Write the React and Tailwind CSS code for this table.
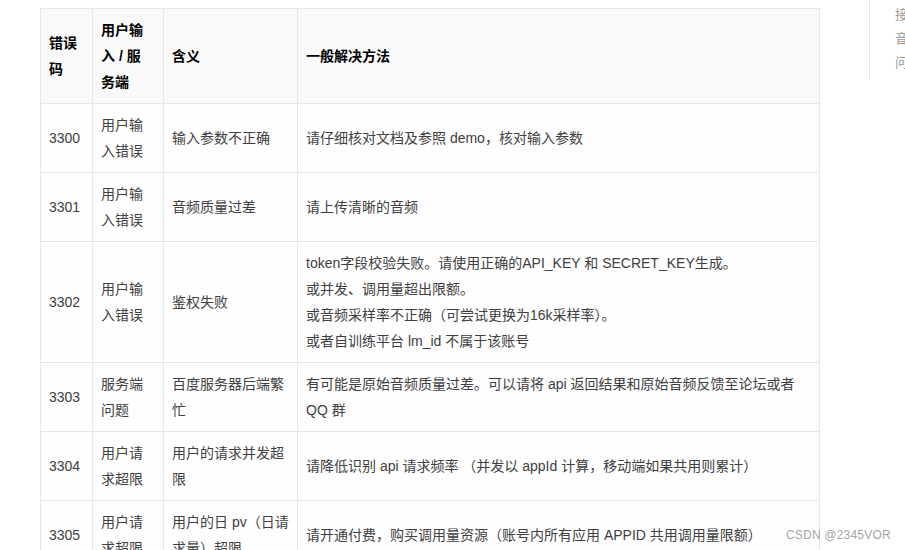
import React from 'react';

const rows = [
  { code: '3300', type: '用户输入错误', meaning: '输入参数不正确', fix: ['请仔细核对文档及参照 demo，核对输入参数'] },
  { code: '3301', type: '用户输入错误', meaning: '音频质量过差', fix: ['请上传清晰的音频'] },
  {
    code: '3302',
    type: '用户输入错误',
    meaning: '鉴权失败',
    fix: [
      'token字段校验失败。请使用正确的API_KEY 和 SECRET_KEY生成。',
      '或并发、调用量超出限额。',
      '或音频采样率不正确（可尝试更换为16k采样率）。',
      '或者自训练平台 lm_id 不属于该账号',
    ],
  },
  { code: '3303', type: '服务端问题', meaning: '百度服务器后端繁忙', fix: ['有可能是原始音频质量过差。可以请将 api 返回结果和原始音频反馈至论坛或者 QQ 群'] },
  { code: '3304', type: '用户请求超限', meaning: '用户的请求并发超限', fix: ['请降低识别 api 请求频率 （并发以 appId 计算，移动端如果共用则累计）'] },
  { code: '3305', type: '用户请求超限', meaning: '用户的日 pv（日请求量）超限', fix: ['请开通付费，购买调用量资源（账号内所有应用 APPID 共用调用量限额）'] },
];

const cell = 'border border-[#e6e6e6] px-2 py-2 align-middle text-left';

export default function App() {
  return (
    <div
      className="relative w-[905px] h-[550px] overflow-hidden bg-white text-[14px] leading-[26px]"
      style={{ fontFamily: '"Liberation Sans", "Noto Sans CJK SC", sans-serif' }}
    >
      <div className="flex items-start pl-[40px]">
        {/* Article table */}
        <table className="mt-[8px] w-[779px] shrink-0 table-fixed border-collapse">
          <colgroup>
            <col className="w-[52px]" />
            <col className="w-[71px]" />
            <col className="w-[134px]" />
            <col className="w-[522px]" />
          </colgroup>
          <thead>
            <tr className="bg-[#f9f9f9] text-black font-bold">
              <th className={cell}>错误码</th>
              <th className={`${cell} pr-[10px]`}>用户输入 / 服务端</th>
              <th className={cell}>含义</th>
              <th className={cell}>一般解决方法</th>
            </tr>
          </thead>
          <tbody className="text-[#404040]">
            {rows.map((r) => (
              <tr key={r.code} className="bg-[#fefefe]">
                <td className={cell}>{r.code}</td>
                <td className={cell}>{r.type}</td>
                <td className={cell}>{r.meaning}</td>
                <td className={cell}>
                  {r.fix.map((line, i) => (
                    <div key={i}>{line}</div>
                  ))}
                </td>
              </tr>
            ))}
          </tbody>
        </table>

        {/* Sidebar, cut off at the right edge */}
        <div className="ml-[49px] h-[80px] shrink-0 border-l border-[#e8e8e8] pl-[25px] pt-[3px] text-[13px] leading-[24px] text-[#999]">
          <div>接</div>
          <div>音</div>
          <div>问</div>
        </div>
      </div>

      {/* Watermark */}
      <div className="absolute left-[786px] top-[527px] text-[12px] leading-[16px] tracking-[0.2px] text-[#a6a6a6]">
        CSDN @2345VOR
      </div>
    </div>
  );
}
